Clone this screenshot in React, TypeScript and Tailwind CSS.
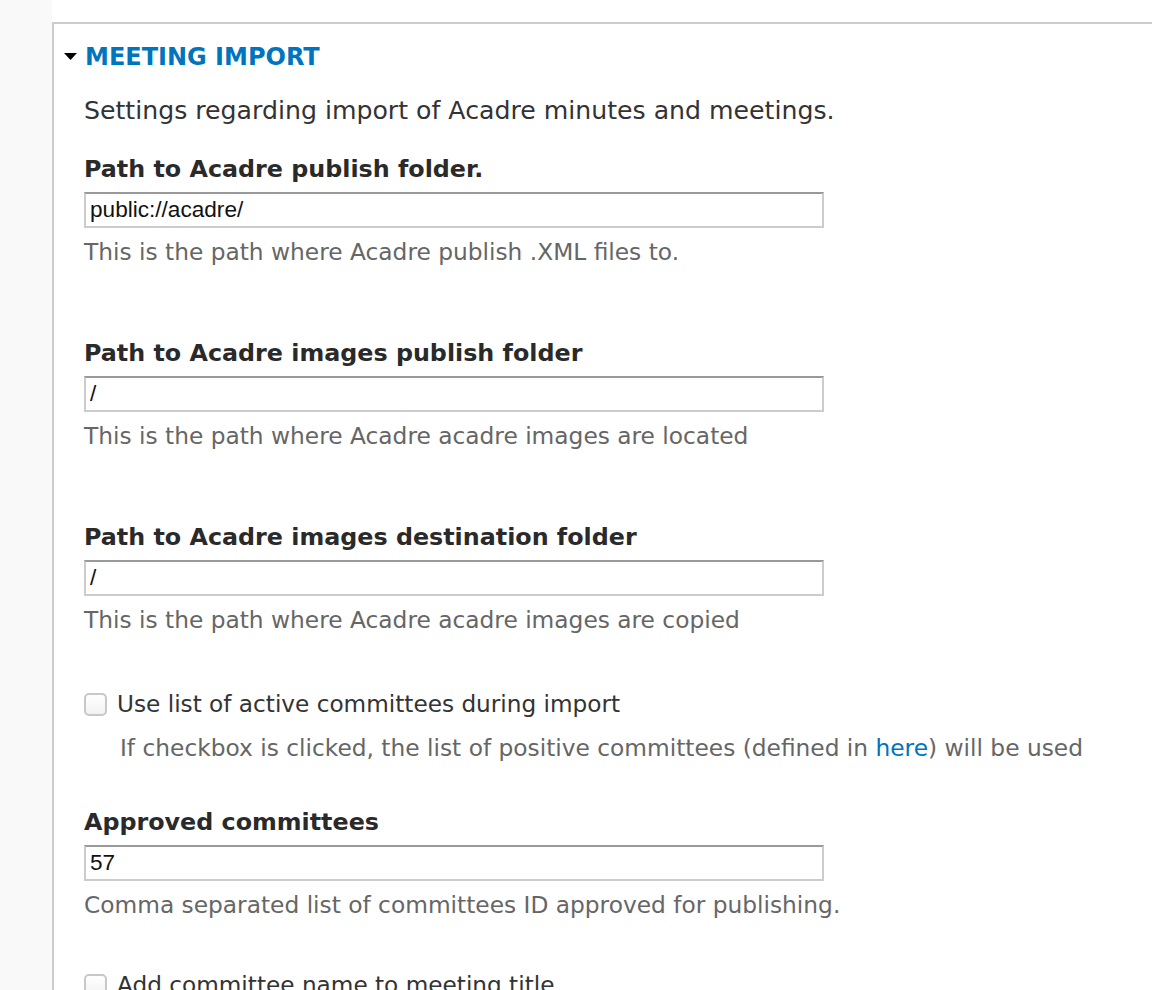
import React from "react";

const font = { fontFamily: '"DejaVu Sans", "Lucida Grande", Verdana, sans-serif' };
const inputFont = { fontFamily: '"Liberation Sans", Arial, sans-serif' };

function TextField({ label, value, desc, mt }: { label: string; value: string; desc: string; mt: string }) {
  return (
    <div className={mt}>
      <div className="h-[36px] pt-[3px] flex items-center font-bold text-[23.8px] text-[#2a2a2a] whitespace-nowrap">{label}</div>
      <div
        className="mt-[6px] w-[740px] h-[36px] border-2 border-[#ccc] border-t-[#999] bg-white flex items-center pl-[4px] text-[22.6px] text-[#111]"
        style={inputFont}
      >
        {value}
      </div>
      <div className="h-[46px] pt-[2px] flex items-center text-[23.3px] text-[#666] whitespace-nowrap">{desc}</div>
    </div>
  );
}

function Checkbox() {
  return (
    <div className="w-[23px] h-[23px] rounded-[5px] border-2 border-[#c8c8c8] bg-gradient-to-b from-white to-[#f2f2f2] shrink-0" />
  );
}

export default function App() {
  return (
    <div className="flex w-[1152px] h-[990px] overflow-hidden bg-white" style={font}>
      <div className="w-[52px] shrink-0 bg-[#f9f9f9]" />
      <div className="flex-1 pt-[22px] bg-white">
        <div className="border-t-2 border-l-2 border-[#ccc] h-full pl-[30px]">
          <div className="h-[64px] pt-[2px] flex items-center -ml-[20px]">
            <svg width="13" height="8" viewBox="0 0 13 8" className="mr-[8px]">
              <polygon points="0,0 13,0 6.5,7" fill="#000" />
            </svg>
            <span className="font-bold text-[24px] text-[#0074bd]">MEETING IMPORT</span>
          </div>
          <div className="h-[44px] pt-[2px] flex items-center text-[25.2px] text-[#333] whitespace-nowrap">
            Settings regarding import of Acadre minutes and meetings.
          </div>
          <TextField
            mt="mt-[18px]"
            label="Path to Acadre publish folder."
            value="public://acadre/"
            desc="This is the path where Acadre publish .XML files to."
          />
          <TextField
            mt="mt-[60px]"
            label="Path to Acadre images publish folder"
            value="/"
            desc="This is the path where Acadre acadre images are located"
          />
          <TextField
            mt="mt-[60px]"
            label="Path to Acadre images destination folder"
            value="/"
            desc="This is the path where Acadre acadre images are copied"
          />
          <div className="mt-[44px] h-[36px] flex items-center">
            <Checkbox />
            <span className="ml-[10px] text-[23.2px] text-[#333] whitespace-nowrap">Use list of active committees during import</span>
          </div>
          <div className="h-[50px] pt-[2px] flex items-center pl-[36px] text-[23.3px] text-[#666] whitespace-nowrap">
            If checkbox is clicked, the list of positive committees (defined in&nbsp;
            <span className="text-[#0074bd]">here</span>) will be used
          </div>
          <TextField
            mt="mt-[31px]"
            label="Approved committees"
            value="57"
            desc="Comma separated list of committees ID approved for publishing."
          />
          <div className="mt-[40px] h-[36px] flex items-center">
            <Checkbox />
            <span className="ml-[10px] text-[23.2px] text-[#333] whitespace-nowrap">Add committee name to meeting title</span>
          </div>
        </div>
      </div>
    </div>
  );
}
